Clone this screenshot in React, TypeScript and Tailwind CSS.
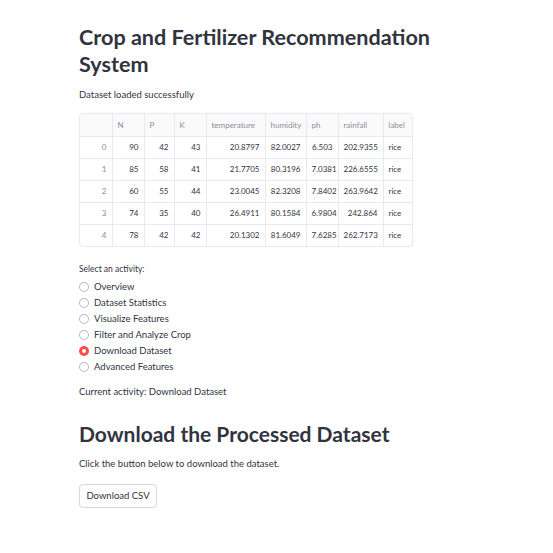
import { useState } from 'react';

const rows = [
    { n: 90, p: 42, k: 43, t: '20.8797', h: '82.0027', ph: '6.503', r: '202.9355', l: 'rice' },
    { n: 85, p: 58, k: 41, t: '21.7705', h: '80.3196', ph: '7.0381', r: '226.6555', l: 'rice' },
    { n: 60, p: 55, k: 44, t: '23.0045', h: '82.3208', ph: '7.8402', r: '263.9642', l: 'rice' },
    { n: 74, p: 35, k: 40, t: '26.4911', h: '80.1584', ph: '6.9804', r: '242.864', l: 'rice' },
    { n: 78, p: 42, k: 42, t: '20.1302', h: '81.6049', ph: '7.6285', r: '262.7173', l: 'rice' },
];

const activities = [
    'Overview',
    'Dataset Statistics',
    'Visualize Features',
    'Filter and Analyze Crop',
    'Download Dataset',
    'Advanced Features',
];

const cols = ['w-[32px]', 'w-[32px]', 'w-[30px]', 'w-[32px]', 'w-[59px]', 'w-[41px]', 'w-[32px]', 'w-[45px]', 'w-[31px]'];

export default function App() {
    const [activity, setActivity] = useState('Download Dataset');

    const th = 'border-l border-[#e6e9ef] px-[5px] text-left font-normal text-[#8a8d98]';
    const td = 'border-l border-t border-[#e6e9ef] px-[5px] text-right';

    return (
        <div className="min-h-[553px] bg-white font-['Lato',sans-serif] text-[#31333f]">
            <div className="w-[480px] pl-[79px] pt-[24px]">
                <h1 className="text-[21.6px] font-bold leading-[26.5px] text-[#31333f]">
                    Crop and Fertilizer Recommendation System
                </h1>

                <p className="mt-[11px] text-[9.5px] leading-[14px]">Dataset loaded successfully</p>

                <div className="mt-[11px] w-[334px] overflow-hidden rounded-[4px] border border-[#e6e9ef]">
                    <table className="w-full table-fixed border-collapse text-[8px]">
                        <colgroup>
                            {cols.map((c, i) => (
                                <col key={i} className={c} />
                            ))}
                        </colgroup>
                        <thead>
                            <tr className="h-[22px] bg-[#fafafb]">
                                <th className="font-normal" />
                                <th className={th}>N</th>
                                <th className={th}>P</th>
                                <th className={th}>K</th>
                                <th className={th}>temperature</th>
                                <th className={th}>humidity</th>
                                <th className={th}>ph</th>
                                <th className={th}>rainfall</th>
                                <th className={th}>label</th>
                            </tr>
                        </thead>
                        <tbody>
                            {rows.map((r, i) => (
                                <tr key={i} className="h-[22px]">
                                    <td className="border-t border-[#e6e9ef] px-[5px] text-right text-[#8a8d98]">{i}</td>
                                    <td className={td}>{r.n}</td>
                                    <td className={td}>{r.p}</td>
                                    <td className={td}>{r.k}</td>
                                    <td className={td}>{r.t}</td>
                                    <td className={td}>{r.h}</td>
                                    <td className={td}>{r.ph}</td>
                                    <td className={td}>{r.r}</td>
                                    <td className="border-l border-t border-[#e6e9ef] px-[5px] text-left">{r.l}</td>
                                </tr>
                            ))}
                        </tbody>
                    </table>
                </div>

                <p className="mt-[16px] text-[8.5px] leading-[12px]">Select an activity:</p>

                <div className="mt-[4px] flex flex-col">
                    {activities.map(a => {
                        const on = a === activity;
                        return (
                            <button
                                key={a}
                                onClick={() => setActivity(a)}
                                className="flex h-[16px] items-center gap-[5px] text-left text-[9.5px]"
                            >
                                {on ? (
                                    <span className="flex h-[10px] w-[10px] items-center justify-center rounded-full bg-[#ff4b4b]">
                                        <span className="h-[4px] w-[4px] rounded-full bg-white" />
                                    </span>
                                ) : (
                                    <span className="h-[10px] w-[10px] rounded-full border border-[#b7b9c0]" />
                                )}
                                <span>{a}</span>
                            </button>
                        );
                    })}
                </div>

                <p className="mt-[10px] text-[9.5px] leading-[14px]">Current activity: {activity}</p>

                <h2 className="mt-[22px] text-[21px] font-bold leading-[26px]">
                    Download the Processed Dataset
                </h2>

                <p className="mt-[10px] text-[9.5px] leading-[14px]">Click the button below to download the dataset.</p>

                <button className="mt-[13px] flex h-[24px] w-[78px] items-center justify-center rounded-[4px] border border-[#d5d6da] bg-white text-[9.5px]">
                    Download CSV
                </button>
            </div>
        </div>
    );
}
